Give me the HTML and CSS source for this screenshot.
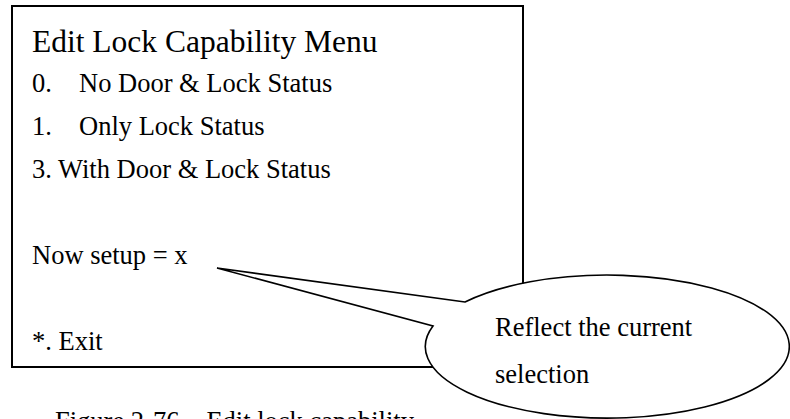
FILE: index.html
```html
<!DOCTYPE html>
<html lang="en">
<head>
<meta charset="utf-8">
<title>Edit Lock Capability Menu</title>
<link rel="stylesheet" href="styles.css">
</head>
<body>
<div class="figure">
  <div class="menu-box">
    <div class="title">Edit Lock Capability Menu</div>
    <div class="item"><span class="num">0.</span><span>No Door &amp; Lock Status</span></div>
    <div class="item"><span class="num">1.</span><span>Only Lock Status</span></div>
    <div class="item">3. With Door &amp; Lock Status</div>
    <div class="item blank">&nbsp;</div>
    <div class="item">Now setup = x</div>
    <div class="item blank">&nbsp;</div>
    <div class="item">*. Exit</div>
  </div>
  <div class="caption"><span>Figure 2-76</span><span class="caption-text">Edit lock capability</span></div>

  <svg class="callout" width="790" height="419" viewBox="0 0 790 419" aria-hidden="true">
    <path d="M 465 302 L 217 268 L 433 326 A 182 71.5 0 1 0 465 302 Z" fill="#fff" stroke="#000" stroke-width="1.6" stroke-linejoin="miter"/>
  </svg>
  <div class="callout-text">Reflect the current<br>selection</div>
</div>
</body>
</html>
```
FILE: styles.css
```css
html, body {
  margin: 0;
  padding: 0;
  background: #fff;
}

body {
  font-family: "Liberation Serif", "Times New Roman", serif;
  color: #000;
  width: 790px;
  height: 419px;
  overflow: hidden;
}

.figure {
  position: relative;
  width: 790px;
  height: 419px;
  padding-top: 5px;
  box-sizing: border-box;
}

.menu-box {
  margin-left: 11px;
  width: 513px;
  box-sizing: border-box;
  border: 2px solid #000;
  padding: 14px 0 2.5px 19px;
}

.title {
  font-size: 31.5px;
  line-height: 41px;
}

.item {
  font-size: 26.5px;
  line-height: 43px;
  display: flex;
  white-space: pre;
}

.num {
  width: 47px;
  flex: none;
}

.caption {
  margin-top: 32px;
  padding-left: 55px;
  font-size: 26.5px;
  line-height: 43px;
  white-space: nowrap;
}

.caption-text {
  margin-left: 27px;
}

.callout {
  position: absolute;
  left: 0;
  top: 0;
}

.callout-text {
  position: absolute;
  left: 495px;
  top: 303.5px;
  font-size: 26.5px;
  line-height: 47px;
  white-space: nowrap;
}
```
